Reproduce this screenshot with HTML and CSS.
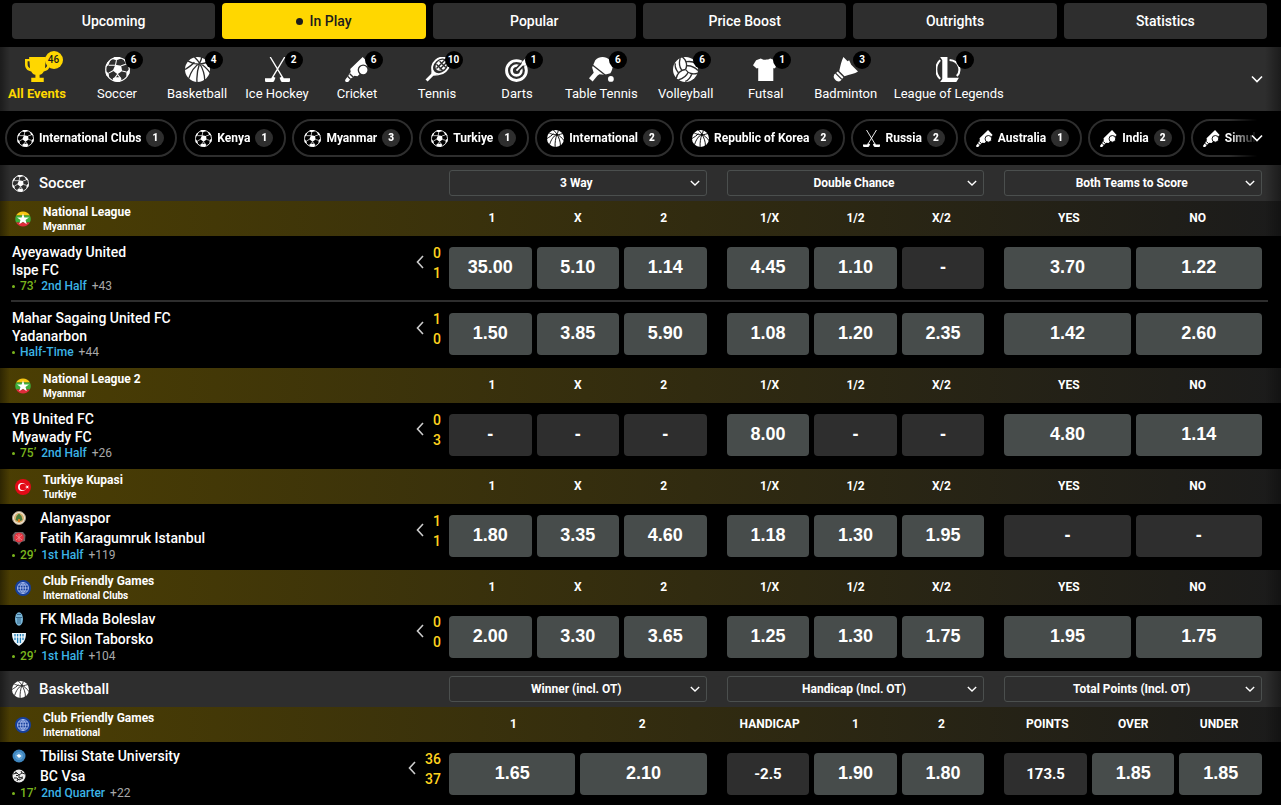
FILE: index.html
```html
<!DOCTYPE html>
<html lang="en">

<head>
    <meta charset="UTF-8">
    <meta name="viewport" content="width=device-width, initial-scale=1.0">
    <title>In Play</title>
    <link rel="stylesheet" href="styles.css">
</head>

<body>
    <!-- icon sprite -->
    <svg class="sprite" aria-hidden="true">
        <symbol id="down" viewBox="0 0 12 12">
            <path d="M1 3.5l5 5 5-5" fill="none" stroke="currentColor" stroke-width="1.6" />
        </symbol>
        <symbol id="left" viewBox="0 0 8 14">
            <path d="M7 1L1.500 7 7 13" fill="none" stroke="currentColor" stroke-width="1.6" />
        </symbol>
        <symbol id="cup" viewBox="0 0 24 24">
            <path d="M4 0h16v2h4v5c0 4-2 6-6 7-1 2-2 3-4 3v3h4v4H6v-4h4v-3c-2 0-3-1-4-3-4-1-6-3-6-7V2h4zM2.500 4v3c0 2 1 3 2.300 3.700L4.300 4zM21.500 4h-1.800l-.5 6.700C20.500 10 21.500 9 21.500 7z" fill="currentColor" />
        </symbol>
        <symbol id="soccer" viewBox="0 0 24 24">
            <circle cx="12" cy="12" r="11.300" fill="none" stroke="currentColor" stroke-width="1.200" />
            <path d="M10 7.500l5.500 1 1 5-4.500 3-4.500-3.500zM7 1.800L11 3l4.500-1.500L14 0H9zM.5 9.500l2.700-1.500L5 3.500 2.300 5zM23.500 8l-3.500-1-2-4.500L21 4zM4 19.500l-.5-4L.5 13.500l.5 4zM20.500 18.500l0-4 3.200-3-.2 4.500zM8 23l-.5-2.500 2-1h5l1.500 1.500L14 24z" fill="currentColor" />
            <path d="M10 8l1-5M8 13L3.500 15.500M10 8L3.500 8M15.500 8.500l4.500-1.500M16.500 13.500l4 1M12 16.500l-2.500 3.500M12 16.500l3 4" fill="none" stroke="currentColor" />
        </symbol>
        <symbol id="basketball" viewBox="0 0 24 24">
            <circle cx="12" cy="12" r="12" fill="currentColor" />
            <path class="cut" d="M3 4c5 3 11 4 19 1M14 6C9 9 6 13 3.500 21M14 6c-2 6-3 12-2.500 18M14 6c3 5 5 10 5 17M14 6c4 2 7 5 10 9M14 6C13 4 11 2 9 0M14 6c1-2 2-4 2-6M0 12C3 10 7 8 9 5" />
        </symbol>
        <symbol id="hockey" viewBox="0 0 24 24">
            <path d="M5 0l11.500 19M19 0L7.500 19" fill="none" stroke="currentColor" stroke-width="1.300" />
            <path d="M7 18.500l3 1.500-1 2.500c-.5 1-1 1.500-2 1.500H1.500C.5 24 0 23.500 0 22.500V20.500h6zM17 18.500L14 20l1 2.500c.5 1 1 1.500 2 1.500h5.500c1 0 1.500-.5 1.500-1.500V20.500h-6z" fill="currentColor" />
        </symbol>
        <symbol id="cricket" viewBox="0 0 24 24">
            <path d="M17 0l6.500 7L12 18.500l-3-.5-2.500 2.500L3.500 17l2-2.500L5 11.500z" fill="currentColor" />
            <path d="M5.500 18L2 22.500" stroke="currentColor" stroke-width="3.600" stroke-linecap="round" />
            <path class="cut" d="M2.500 18.500l3 3M4.500 16l3.500 3.500" />
            <circle class="cut" cx="17.500" cy="12.500" r="4.700" fill="currentColor" />
        </symbol>
        <symbol id="tennis" viewBox="0 0 24 24">
            <ellipse cx="15" cy="8.500" rx="9" ry="7" transform="rotate(-42 15 8.500)" fill="none" stroke="currentColor" stroke-width="1.800" />
            <ellipse cx="15.500" cy="8" rx="6" ry="4.600" transform="rotate(-42 15.500 8)" fill="currentColor" />
            <path class="cut" d="M11 7l6 6M14 4l6 6M11 11l9-9M14 12l7-7" />
            <path d="M6.500 10.500l-.5 5.500-5.500 5.500 2 2L8 18l5.500-.5-3-1z" fill="currentColor" />
        </symbol>
        <symbol id="darts" viewBox="0 0 24 24">
            <circle cx="11" cy="13" r="9.500" fill="none" stroke="currentColor" stroke-width="2.800" />
            <circle cx="11" cy="13" r="4.700" fill="none" stroke="currentColor" stroke-width="2.600" />
            <path class="cut wide" d="M11 13L22 2" />
            <path d="M11 13l8-8" stroke="currentColor" stroke-width="1.800" />
            <path d="M16 8V5l5-5 .5 3L24 3.500l-5 5z" fill="currentColor" />
        </symbol>
        <symbol id="pingpong" viewBox="0 0 24 24">
            <path d="M6 3c4-4 10-4 14 0 3.500 3.500 3.500 8 .5 12.500l-5.500 1.500-5-.5L8 18l-4.500 5.500L0 20.500 4.500 15 3 10z" fill="currentColor" />
            <path class="cut" d="M3 7.500L17 18.500" />
            <circle cx="21" cy="21" r="2.800" fill="currentColor" />
        </symbol>
        <symbol id="volleyball" viewBox="0 0 24 24">
            <circle cx="12" cy="12" r="12" fill="currentColor" />
            <path class="cut" d="M12 12C14 8 13 3 9 0M13 8.500C17 8 21 10 24 13M13 4.500c4-.5 7 0 9 2" />
            <path class="cut" d="M12 12C14 8 13 3 9 0M13 8.500C17 8 21 10 24 13M13 4.500c4-.5 7 0 9 2" transform="rotate(120 12 12)" />
            <path class="cut" d="M12 12C14 8 13 3 9 0M13 8.500C17 8 21 10 24 13M13 4.500c4-.5 7 0 9 2" transform="rotate(240 12 12)" />
        </symbol>
        <symbol id="shirt" viewBox="0 0 24 24">
            <path d="M7.500 1.500c2 1.500 7 1.500 9 0L21 3l3 5-3.500 3-1-.5V23H5V10.500L3.500 11 0 8l3-5z" fill="currentColor" />
        </symbol>
        <symbol id="badminton" viewBox="0 0 24 24">
            <path d="M10 0l4 4 1.500-1 2 4.500 6.500 6.500c-3 2-8 3-13 4.500L6 13.500C7 9 8 4 10 0z" fill="currentColor" />
            <path d="M4.500 14l5.500 5.500-2.500 3c-3 3-9-2-6-6z" fill="currentColor" />
            <path class="cut" d="M2.500 15.500l6 6" />
        </symbol>
        <symbol id="lol" viewBox="0 0 24 24">
            <path d="M4 0h7v20h11l-2.500 4H4l2-3V3z" fill="currentColor" />
            <path d="M4 3C-1 8-1 16 4 21M13 2.800c10 1 11.500 11 7 15.500" fill="none" stroke="currentColor" stroke-width="2" />
        </symbol>
        <symbol id="myanmar" viewBox="0 0 16 16">
            <path d="M1.100 4.500a8 8 0 0 1 13.800 0z" fill="#f7c713" />
            <path d="M1.100 4.500h13.800a8 8 0 0 1 0 7H1.100a8 8 0 0 1 0-7z" fill="#3fae3c" />
            <path d="M1.100 11.500h13.800a8 8 0 0 1-13.800 0z" fill="#e02b3a" />
            <path d="M8 2.500l1.400 4H14l-3.500 2.600 1.300 4.200L8 10.800l-3.800 2.500 1.300-4.200L2 6.500h4.600z" fill="#fff" />
        </symbol>
        <symbol id="turkiye" viewBox="0 0 16 16">
            <circle cx="8" cy="8" r="8" fill="#e30a17" />
            <circle cx="7" cy="8" r="4" fill="#fff" />
            <circle cx="8" cy="8" r="3.200" fill="#e30a17" />
            <path d="M10 8l4-1.500-2.400 3.500V6L14 9.500z" fill="#fff" />
        </symbol>
        <symbol id="world" viewBox="0 0 16 16">
            <circle cx="8" cy="8" r="8" fill="#153f9c" />
            <path d="M8 2.500v11M2.500 8h11M3.500 5h9M3.500 11h9M8 2.500a5.500 5.500 0 1 0 0 11 5.500 5.500 0 1 0 0-11M8 2.500c-3.500 3-3.500 8 0 11 3.500-3 3.500-8 0-11" fill="none" stroke="#b6c8f5" stroke-width=".8" />
        </symbol>
        <symbol id="alanya" viewBox="0 0 14 14">
            <circle cx="7" cy="7" r="6.500" fill="#f3eadb" stroke="#a89a84" />
            <circle cx="7" cy="7" r="5" fill="#d8b070" />
            <path d="M7 2.500l2.500 2.500 1 4-3.500 1.500L3.500 9l1-4z" fill="#4a7a3a" />
            <path d="M6 8h2v3H6z" fill="#d97a1f" />
        </symbol>
        <symbol id="fatih" viewBox="0 0 14 14">
            <path d="M3 1h8l2.500 3-.5 6-3.500 1L7 14l-2.500-3L1 10 .5 4z" fill="#6e6265" />
            <circle cx="7" cy="6.500" r="4.800" fill="#e5343f" />
            <path d="M4 4l6 5M10 4L4 9M7 3v7" stroke="#f59aa0" stroke-width=".7" />
        </symbol>
        <symbol id="mlada" viewBox="0 0 14 14">
            <ellipse cx="7" cy="7" rx="4" ry="6.700" fill="#79b6d8" />
            <path d="M5 2.500h4M4 5.500h6M6 6v6M8 6v6" stroke="#3a6a8e" />
        </symbol>
        <symbol id="silon" viewBox="0 0 14 14">
            <path d="M0 1h14c0 6-2 10-7 13C2 11 0 7 0 1z" fill="#e8f3fa" />
            <path d="M3 2v6M5.600 2v9M8.400 2v9M11 2v6" stroke="#2382bd" stroke-width="1.300" />
            <path d="M1 5h12" stroke="#fff" />
        </symbol>
        <symbol id="tbilisi" viewBox="0 0 14 14">
            <circle cx="7" cy="7" r="6.500" fill="#3f86bf" />
            <circle cx="7" cy="7" r="4.500" fill="#5c9fd3" stroke="#3f86bf" />
            <path d="M4.500 6.500L7 5l2.500 2L7 9z" fill="#fff" />
        </symbol>
        <symbol id="vsa" viewBox="0 0 14 14">
            <circle cx="7" cy="7" r="6.500" fill="#eee" />
            <path d="M1 5l4-1 2 2 3-2 3 1M2 9l3 0 2 2 4-2M3 3l2 1M7 6v3l4-1M5 12l1-2M9 2l1 2M4 6.500h2" fill="none" stroke="#222" />
        </symbol>
    </svg>

    <div class="tabs">
        <button>Upcoming</button>
        <button class="active"><i class="dot"></i>In Play</button>
        <button>Popular</button>
        <button>Price Boost</button>
        <button>Outrights</button>
        <button>Statistics</button>
    </div>

    <nav class="sports">
        <a href="#" class="active"><span class="pic"><svg><use href="#cup" /></svg><b>46</b></span>All Events</a>
        <a href="#"><span class="pic"><svg><use href="#soccer" /></svg><b>6</b></span>Soccer</a>
        <a href="#"><span class="pic"><svg><use href="#basketball" /></svg><b>4</b></span>Basketball</a>
        <a href="#"><span class="pic"><svg><use href="#hockey" /></svg><b>2</b></span>Ice Hockey</a>
        <a href="#"><span class="pic"><svg><use href="#cricket" /></svg><b>6</b></span>Cricket</a>
        <a href="#"><span class="pic"><svg><use href="#tennis" /></svg><b>10</b></span>Tennis</a>
        <a href="#"><span class="pic"><svg><use href="#darts" /></svg><b>1</b></span>Darts</a>
        <a href="#"><span class="pic"><svg><use href="#pingpong" /></svg><b>6</b></span>Table Tennis</a>
        <a href="#"><span class="pic"><svg><use href="#volleyball" /></svg><b>6</b></span>Volleyball</a>
        <a href="#"><span class="pic"><svg><use href="#shirt" /></svg><b>1</b></span>Futsal</a>
        <a href="#"><span class="pic"><svg><use href="#badminton" /></svg><b>3</b></span>Badminton</a>
        <a href="#"><span class="pic"><svg><use href="#lol" /></svg><b>1</b></span>League of Legends</a>
        <button class="more" aria-label="More sports"><svg><use href="#down" /></svg></button>
    </nav>

    <div class="regions">
        <div class="chips">
            <a href="#"><svg><use href="#soccer" /></svg>International Clubs<b>1</b></a>
            <a href="#"><svg><use href="#soccer" /></svg>Kenya<b>1</b></a>
            <a href="#"><svg><use href="#soccer" /></svg>Myanmar<b>3</b></a>
            <a href="#"><svg><use href="#soccer" /></svg>Turkiye<b>1</b></a>
            <a href="#"><svg><use href="#basketball" /></svg>International<b>2</b></a>
            <a href="#"><svg><use href="#basketball" /></svg>Republic of Korea<b>2</b></a>
            <a href="#"><svg><use href="#hockey" /></svg>Russia<b>2</b></a>
            <a href="#"><svg><use href="#cricket" /></svg>Australia<b>1</b></a>
            <a href="#"><svg><use href="#cricket" /></svg>India<b>2</b></a>
            <a href="#"><svg><use href="#cricket" /></svg>Simulated</a>
        </div>
        <button class="more" aria-label="More regions"><svg><use href="#down" /></svg></button>
    </div>

    <!-- soccer -->
    <section>
        <div class="row sport">
            <h2 class="info"><svg><use href="#soccer" /></svg>Soccer</h2>
            <div class="markets">
                <div class="pick"><select aria-label="First market"><option>3 Way</option></select><svg><use href="#down" /></svg></div>
                <div class="pick"><select aria-label="Second market"><option>Double Chance</option></select><svg><use href="#down" /></svg></div>
                <div class="pick"><select aria-label="Third market"><option>Both Teams to Score</option></select><svg><use href="#down" /></svg></div>
            </div>
        </div>

        <div class="row league">
            <div class="info"><svg><use href="#myanmar" /></svg><div><h3>National League</h3><p>Myanmar</p></div></div>
            <div class="markets">
                <div class="names"><span>1</span><span>X</span><span>2</span></div>
                <div class="names"><span>1/X</span><span>1/2</span><span>X/2</span></div>
                <div class="names"><span>YES</span><span>NO</span></div>
            </div>
        </div>
        <div class="row match">
            <div class="info">
                <div class="teams">
                    <div>Ayeyawady United</div>
                    <div>Ispe FC</div>
                    <p><i></i><em>73’</em><a href="#">2nd Half</a>+43</p>
                </div>
                <svg class="back"><use href="#left" /></svg>
                <div class="score">0<br>1</div>
            </div>
            <div class="markets">
                <div class="odds"><button>35.00</button><button>5.10</button><button>1.14</button></div>
                <div class="odds"><button>4.45</button><button>1.10</button><button disabled>-</button></div>
                <div class="odds"><button>3.70</button><button>1.22</button></div>
            </div>
        </div>
        <hr>
        <div class="row match">
            <div class="info">
                <div class="teams">
                    <div>Mahar Sagaing United FC</div>
                    <div>Yadanarbon</div>
                    <p><i></i><a href="#">Half-Time</a>+44</p>
                </div>
                <svg class="back"><use href="#left" /></svg>
                <div class="score">1<br>0</div>
            </div>
            <div class="markets">
                <div class="odds"><button>1.50</button><button>3.85</button><button>5.90</button></div>
                <div class="odds"><button>1.08</button><button>1.20</button><button>2.35</button></div>
                <div class="odds"><button>1.42</button><button>2.60</button></div>
            </div>
        </div>

        <div class="row league">
            <div class="info"><svg><use href="#myanmar" /></svg><div><h3>National League 2</h3><p>Myanmar</p></div></div>
            <div class="markets">
                <div class="names"><span>1</span><span>X</span><span>2</span></div>
                <div class="names"><span>1/X</span><span>1/2</span><span>X/2</span></div>
                <div class="names"><span>YES</span><span>NO</span></div>
            </div>
        </div>
        <div class="row match">
            <div class="info">
                <div class="teams">
                    <div>YB United FC</div>
                    <div>Myawady FC</div>
                    <p><i></i><em>75’</em><a href="#">2nd Half</a>+26</p>
                </div>
                <svg class="back"><use href="#left" /></svg>
                <div class="score">0<br>3</div>
            </div>
            <div class="markets">
                <div class="odds"><button disabled>-</button><button disabled>-</button><button disabled>-</button></div>
                <div class="odds"><button>8.00</button><button disabled>-</button><button disabled>-</button></div>
                <div class="odds"><button>4.80</button><button>1.14</button></div>
            </div>
        </div>

        <div class="row league">
            <div class="info"><svg><use href="#turkiye" /></svg><div><h3>Turkiye Kupasi</h3><p>Turkiye</p></div></div>
            <div class="markets">
                <div class="names"><span>1</span><span>X</span><span>2</span></div>
                <div class="names"><span>1/X</span><span>1/2</span><span>X/2</span></div>
                <div class="names"><span>YES</span><span>NO</span></div>
            </div>
        </div>
        <div class="row match">
            <div class="info">
                <div class="teams logos">
                    <div><svg><use href="#alanya" /></svg>Alanyaspor</div>
                    <div><svg><use href="#fatih" /></svg>Fatih Karagumruk Istanbul</div>
                    <p><i></i><em>29’</em><a href="#">1st Half</a>+119</p>
                </div>
                <svg class="back"><use href="#left" /></svg>
                <div class="score">1<br>1</div>
            </div>
            <div class="markets">
                <div class="odds"><button>1.80</button><button>3.35</button><button>4.60</button></div>
                <div class="odds"><button>1.18</button><button>1.30</button><button>1.95</button></div>
                <div class="odds"><button disabled>-</button><button disabled>-</button></div>
            </div>
        </div>

        <div class="row league">
            <div class="info"><svg><use href="#world" /></svg><div><h3>Club Friendly Games</h3><p>International Clubs</p></div></div>
            <div class="markets">
                <div class="names"><span>1</span><span>X</span><span>2</span></div>
                <div class="names"><span>1/X</span><span>1/2</span><span>X/2</span></div>
                <div class="names"><span>YES</span><span>NO</span></div>
            </div>
        </div>
        <div class="row match">
            <div class="info">
                <div class="teams logos">
                    <div><svg><use href="#mlada" /></svg>FK Mlada Boleslav</div>
                    <div><svg><use href="#silon" /></svg>FC Silon Taborsko</div>
                    <p><i></i><em>29’</em><a href="#">1st Half</a>+104</p>
                </div>
                <svg class="back"><use href="#left" /></svg>
                <div class="score">0<br>0</div>
            </div>
            <div class="markets">
                <div class="odds"><button>2.00</button><button>3.30</button><button>3.65</button></div>
                <div class="odds"><button>1.25</button><button>1.30</button><button>1.75</button></div>
                <div class="odds"><button>1.95</button><button>1.75</button></div>
            </div>
        </div>
    </section>

    <!-- basketball -->
    <section>
        <div class="row sport">
            <h2 class="info"><svg><use href="#basketball" /></svg>Basketball</h2>
            <div class="markets">
                <div class="pick"><select aria-label="First market"><option>Winner (incl. OT)</option></select><svg><use href="#down" /></svg></div>
                <div class="pick"><select aria-label="Second market"><option>Handicap (Incl. OT)</option></select><svg><use href="#down" /></svg></div>
                <div class="pick"><select aria-label="Third market"><option>Total Points (Incl. OT)</option></select><svg><use href="#down" /></svg></div>
            </div>
        </div>

        <div class="row league">
            <div class="info"><svg><use href="#world" /></svg><div><h3>Club Friendly Games</h3><p>International</p></div></div>
            <div class="markets">
                <div class="names"><span>1</span><span>2</span></div>
                <div class="names"><span>HANDICAP</span><span>1</span><span>2</span></div>
                <div class="names"><span>POINTS</span><span>OVER</span><span>UNDER</span></div>
            </div>
        </div>
        <div class="row match">
            <div class="info">
                <div class="teams logos">
                    <div><svg><use href="#tbilisi" /></svg>Tbilisi State University</div>
                    <div><svg><use href="#vsa" /></svg>BC Vsa</div>
                    <p><i></i><em>17’</em><a href="#">2nd Quarter</a>+22</p>
                </div>
                <svg class="back"><use href="#left" /></svg>
                <div class="score">36<br>37</div>
            </div>
            <div class="markets">
                <div class="odds"><button>1.65</button><button>2.10</button></div>
                <div class="odds"><span class="line">-2.5</span><button>1.90</button><button>1.80</button></div>
                <div class="odds"><span class="line">173.5</span><button>1.85</button><button>1.85</button></div>
            </div>
        </div>
    </section>
</body>

</html>
```

FILE: styles.css
```css
* {
    margin: 0;
    padding: 0;
    box-sizing: border-box;
}

body {
    background-color: #000;
    color: #fff;
    font-family: Roboto, "Liberation Sans", sans-serif;
    overflow-x: hidden;
    --cut: #2e2e2e;
}

a {
    color: inherit;
    text-decoration: none;
}

button,
select {
    font-family: inherit;
    color: #fff;
    border: none;
}

svg {
    display: block;
    flex: none;
}

.sprite {
    position: absolute;
    width: 0;
    height: 0;
}

.cut {
    stroke: var(--cut);
    stroke-width: 1.3px;
    fill: none;
}

circle.cut {
    fill: currentColor;
}

.cut.wide {
    stroke-width: 5px;
}

/* tabs */
.tabs {
    display: grid;
    grid-template-columns: repeat(6, 1fr);
    gap: 7px;
    padding: 3px 14px 8px 12px;
}

.tabs button {
    height: 36px;
    border-radius: 4px;
    background-color: #2e2e2e;
    font-size: 14px;
    font-weight: 500;
}

.tabs .active {
    background-color: #ffd700;
    color: #1c1c1c;
}

.dot {
    display: inline-block;
    width: 7px;
    height: 7px;
    margin: 0 6px 2px 0;
    border-radius: 50%;
    background-color: #1c1c1c;
    vertical-align: middle;
}

/* sports */
.sports {
    position: relative;
    display: flex;
    height: 64px;
    padding-right: 40px;
    background: linear-gradient(90deg, rgba(0, 0, 0, 0.4), transparent 10px, transparent calc(100% - 16px), rgba(0, 0, 0, 0.4)), #2e2e2e;
}

.sports a {
    display: flex;
    flex-direction: column;
    align-items: center;
    min-width: 80px;
    padding: 10px 8px 0;
    font-size: 13px;
    line-height: 20px;
    white-space: nowrap;
}

.sports a:first-child {
    min-width: 77px;
    padding: 10px 3px 0 0;
}

.sports .active {
    color: #ffd700;
    font-weight: 700;
}

.pic {
    position: relative;
    width: 25px;
    height: 27px;
}

.pic svg {
    width: 25px;
    height: 25px;
}

.pic b {
    position: absolute;
    top: -6px;
    left: 20px;
    width: 18px;
    height: 18px;
    border-radius: 50%;
    background-color: #000;
    font-size: 10px;
    line-height: 18px;
    text-align: center;
}

.active .pic b {
    background-color: #ffd700;
    color: #1c1c1c;
    font-weight: 500;
}

.more {
    position: absolute;
    right: 12px;
    top: 50%;
    width: 24px;
    height: 24px;
    margin-top: -12px;
    padding: 6px;
    background: none;
}

.more svg {
    width: 12px;
    height: 12px;
}

/* regions */
.regions {
    position: relative;
    padding: 8px 0;
    --cut: #000;
}

.chips {
    display: flex;
    gap: 6px;
    padding-left: 5px;
    overflow: hidden;
    -webkit-mask-image: linear-gradient(90deg, #000 calc(100% - 52px), transparent calc(100% - 24px));
    mask-image: linear-gradient(90deg, #000 calc(100% - 52px), transparent calc(100% - 24px));
}

.chips a {
    display: flex;
    flex: none;
    align-items: center;
    gap: 5px;
    height: 38px;
    padding: 0 11px 0 10px;
    border: 2px solid #2e2e2e;
    border-radius: 19px;
    font-size: 12px;
    font-weight: 700;
}

.chips svg {
    width: 17px;
    height: 17px;
}

.chips b {
    width: 18px;
    height: 18px;
    border-radius: 50%;
    background-color: #2e2e2e;
    font-size: 10px;
    line-height: 18px;
    text-align: center;
}

/* rows */
.row {
    display: flex;
}

.info {
    display: flex;
    flex: 0 0 449px;
    align-items: center;
    padding: 0 8px 0 12px;
}

.markets {
    display: grid;
    flex: 1;
    grid-template-columns: repeat(3, 1fr);
    gap: 20px;
    align-items: center;
    padding-right: 19px;
}

.sport {
    height: 36px;
    background: linear-gradient(90deg, rgba(0, 0, 0, 0.4), transparent 10px, transparent calc(100% - 16px), rgba(0, 0, 0, 0.4)), #2e2e2e;
}

.sport h2 {
    gap: 10px;
    font-size: 15px;
    font-weight: 500;
}

.sport h2 svg {
    width: 17px;
    height: 17px;
}

.pick {
    position: relative;
}

.pick select {
    display: block;
    width: 100%;
    height: 26px;
    padding-right: 3px;
    border: 1px solid #4b4f4e;
    border-radius: 3px;
    background-color: transparent;
    font-size: 12px;
    font-weight: 700;
    text-align: center;
    text-align-last: center;
    appearance: none;
}

.pick svg {
    position: absolute;
    top: 8px;
    right: 7px;
    width: 10px;
    height: 10px;
    pointer-events: none;
}

.league {
    height: 35px;
    background: linear-gradient(90deg, rgba(0, 0, 0, 0.4), transparent 10px, transparent calc(100% - 16px), rgba(0, 0, 0, 0.3)), linear-gradient(90deg, #4b3e03, #1b1b1b);
}

.league .info {
    gap: 12px;
    padding-top: 1px;
    padding-left: 15px;
}

.league .info svg {
    width: 16px;
    height: 16px;
}

.league h3 {
    font-size: 12px;
    font-weight: 700;
    line-height: 15px;
}

.league p {
    font-size: 10px;
    font-weight: 700;
    line-height: 14px;
}

.names {
    display: flex;
    padding-bottom: 2px;
    font-size: 12px;
    font-weight: 700;
    text-align: center;
}

.names span {
    flex: 1 1 0;
}

.match {
    height: 66px;
}

.match .info {
    align-items: flex-start;
}

.match .markets {
    align-items: start;
    padding-top: 11px;
}

hr {
    height: 2px;
    margin: -2px 13px 0 11px;
    border: none;
    background-color: #2e2e2e;
}

.teams {
    flex: 1;
    padding-top: 7px;
    font-size: 14px;
    font-weight: 500;
    line-height: 18px;
}

.teams div {
    display: flex;
    align-items: center;
    gap: 14px;
}

.teams.logos {
    padding-top: 4px;
    line-height: 20px;
}

.teams svg {
    width: 14px;
    height: 14px;
}

.teams p {
    display: flex;
    align-items: center;
    gap: 5px;
    color: #a8a8a8;
    font-size: 12px;
    font-weight: 400;
    line-height: 15px;
}

.teams i {
    width: 3px;
    height: 3px;
    border-radius: 50%;
    background-color: #7ab51d;
}

.teams em {
    color: #7ab51d;
    font-style: normal;
    font-weight: 500;
}

.teams a {
    color: #3cb4e7;
    font-weight: 500;
}

.back {
    width: 8px;
    height: 14px;
    margin: 19px 9px 0 0;
    color: #ccc;
}

.score {
    padding-top: 7px;
    color: #ffd21f;
    font-size: 14px;
    font-weight: 500;
    line-height: 20px;
    text-align: right;
}

.odds {
    display: flex;
    gap: 5px;
}

.odds button,
.line {
    flex: 1 1 0;
    height: 42px;
    padding-bottom: 2px;
    border-radius: 4px;
    background-color: #474c4b;
    font-family: "Liberation Sans", Arial, sans-serif;
    font-size: 18px;
    font-weight: 700;
    text-align: center;
}

.odds button:disabled {
    background-color: #2e2e2e;
}

.odds .line {
    background-color: #2e2e2e;
    font-family: Roboto, sans-serif;
    font-size: 15px;
    line-height: 42px;
}
```
